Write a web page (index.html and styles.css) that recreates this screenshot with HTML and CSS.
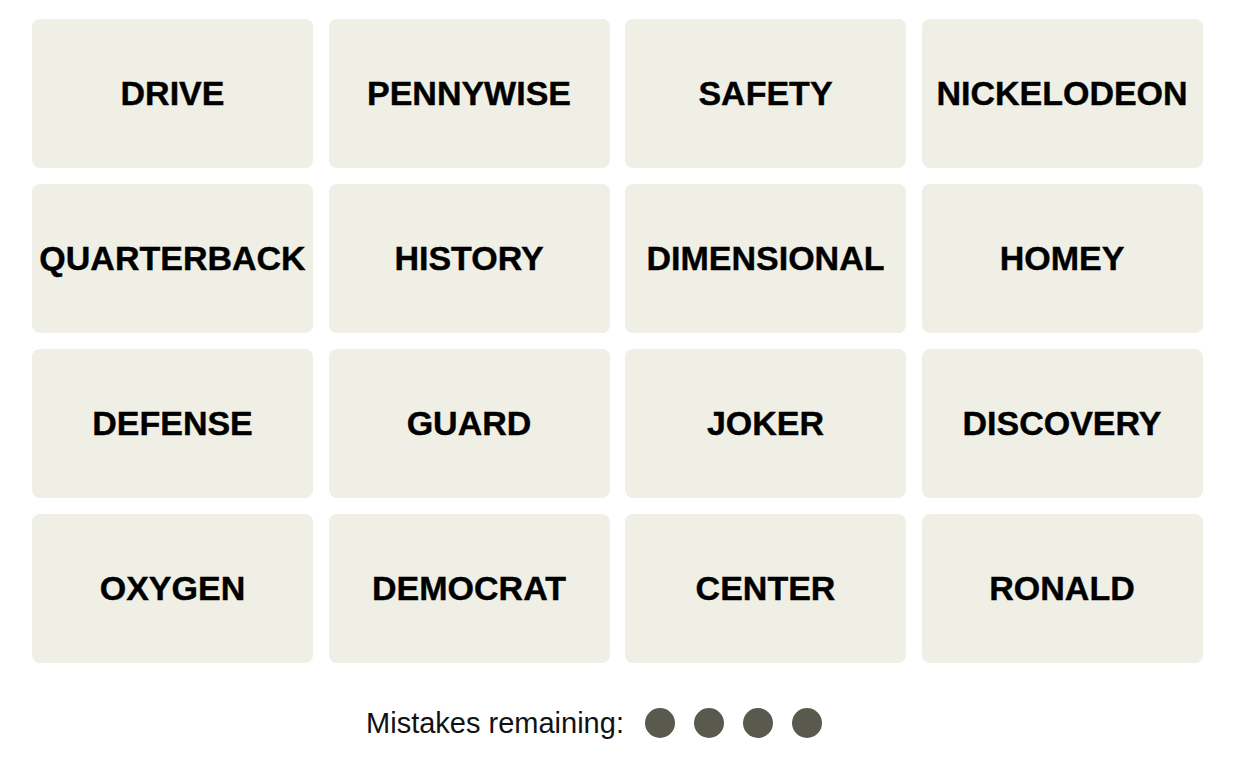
FILE: index.html
```html
<!DOCTYPE html>
<html>
<head>
<meta charset="utf-8">
<link rel="stylesheet" href="styles.css">
</head>
<body>
<div class="board">
  <div class="tile">DRIVE</div>
  <div class="tile">PENNYWISE</div>
  <div class="tile">SAFETY</div>
  <div class="tile">NICKELODEON</div>
  <div class="tile">QUARTERBACK</div>
  <div class="tile">HISTORY</div>
  <div class="tile">DIMENSIONAL</div>
  <div class="tile">HOMEY</div>
  <div class="tile">DEFENSE</div>
  <div class="tile">GUARD</div>
  <div class="tile">JOKER</div>
  <div class="tile">DISCOVERY</div>
  <div class="tile">OXYGEN</div>
  <div class="tile">DEMOCRAT</div>
  <div class="tile">CENTER</div>
  <div class="tile">RONALD</div>
</div>
<div class="mistakes">
  <span class="label">Mistakes remaining:</span>
  <span class="dots">
    <span class="dot"></span><span class="dot"></span><span class="dot"></span><span class="dot"></span>
  </span>
</div>
</body>
</html>
```
FILE: styles.css
```css
html, body {
  margin: 0;
  padding: 0;
  background: #ffffff;
}
body {
  width: 1250px;
  height: 768px;
  overflow: hidden;
  font-family: "Liberation Sans", Arial, sans-serif;
  color: #000;
}
.board {
  display: grid;
  grid-template-columns: repeat(4, 281px);
  grid-template-rows: repeat(4, 149px);
  column-gap: 15.5px;
  row-gap: 16px;
  margin: 19px 0 0 32px;
}
.tile {
  background: #efefe6;
  border-radius: 8px;
  display: flex;
  align-items: center;
  justify-content: center;
  font-weight: 700;
  font-size: 34px;
  -webkit-text-stroke: 0.4px #000;
}
.mistakes {
  display: flex;
  align-items: center;
  justify-content: center;
  margin-top: 45px;
  padding-right: 62px;
  height: 30px;
}
.label {
  font-size: 29px;
  font-weight: 400;
  color: #121212;
  margin-right: 21px;
}
.dots {
  display: flex;
  gap: 19px;
}
.dot {
  width: 30px;
  height: 30px;
  border-radius: 50%;
  background: #5a594e;
}
```
